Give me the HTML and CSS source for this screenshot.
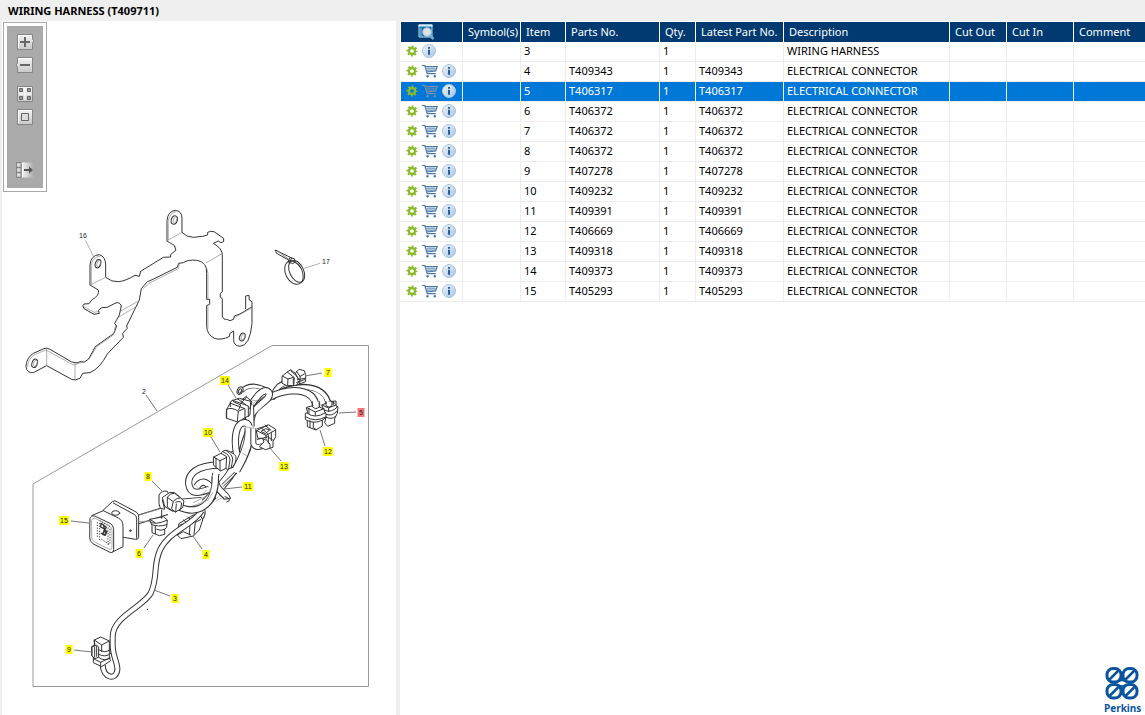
FILE: index.html
```html
<!DOCTYPE html>
<html lang="en">
<head>
<meta charset="utf-8">
<title>WIRING HARNESS (T409711)</title>
<link rel="stylesheet" href="styles.css">
<script src="parts.js" defer></script>
</head>
<body>
<svg class="defs" width="0" height="0" aria-hidden="true">
  <defs>
    <linearGradient id="btn" x1="0" y1="0" x2="0" y2="1"><stop offset="0" stop-color="#f4f4f4"/><stop offset="1" stop-color="#c9c9c9"/></linearGradient>
    <linearGradient id="fade" x1="0" y1="0" x2="1" y2="0"><stop offset="0" stop-color="#f4f4f4"/><stop offset="1" stop-color="#aaa"/></linearGradient>
    <linearGradient id="orb" x1="0" y1="0" x2="1" y2="1"><stop offset="0" stop-color="#f2f7fc"/><stop offset="1" stop-color="#a3c4e0"/></linearGradient>
    <symbol id="gear" viewBox="0 0 12 12"><circle cx="6" cy="6" r="4.600" fill="none" stroke="#8aba2c" stroke-width="1.900" stroke-dasharray="1.800 1.810" stroke-dashoffset=".9"/><circle cx="6" cy="6" r="3" fill="none" stroke="#8aba2c" stroke-width="2.300"/></symbol>
    <symbol id="cart" viewBox="0 0 16 14"><path d="M0 1.500h2.800l2.400 8.200M3.200 2.500h12l-1.600 4.500-9 1M5.200 9.700h8.600" fill="none" stroke="currentColor" stroke-width="1.200"/><path d="M4 4.300h10.500M4.500 6.200h9.500M6 2.500v5M8 2.500v5M10 2.500v5M12 2.500v4.600" fill="none" stroke="currentColor" stroke-width=".6"/><circle cx="5.500" cy="12.200" r="1.200" fill="currentColor"/><circle cx="12.800" cy="12.200" r="1.200" fill="currentColor"/></symbol>
    <symbol id="info" viewBox="0 0 14 14"><circle cx="7" cy="7" r="6.500" fill="url(#orb)" stroke="#a9c5de"/><path d="M6 5.700h2v5H6zM6 3.100h2v1.600H6z" fill="#2c5e9e"/></symbol>
  </defs>
</svg>
<header class="title"><h1>WIRING HARNESS (T409711)</h1></header>
<main class="panes">
  <section class="drawing-pane">
    <div class="toolbar">
      <button class="tool" aria-label="Zoom in"><svg viewBox="0 0 18 16"><path d="M1.500 .5h15v4.500l1.500 2-1.500 2v6.500h-15z" fill="url(#btn)" stroke="#858585"/><path d="M2.500 14V1.500h13" fill="none" stroke="#fff"/><path d="M4 7h10v2H4zM8 3h2v10H8z" fill="#666"/></svg></button>
      <button class="tool" aria-label="Zoom out"><svg viewBox="0 0 18 16"><path d="M1.500 .5h15v15h-15V10L0 8l1.500-2z" fill="url(#btn)" stroke="#858585"/><path d="M2.500 1.500h13" fill="none" stroke="#fff"/><path d="M4 7h10v2H4z" fill="#666"/></svg></button>
      <button class="tool spaced" aria-label="Fit page"><svg viewBox="0 0 18 16"><path d="M1.500 .5h15v15h-15z" fill="url(#btn)" stroke="#858585"/><path d="M3.500 2.500h3v3h-3zM11.500 2.500h3v3h-3zM3.500 10.500h3v3h-3zM11.500 10.500h3v3h-3z" fill="#999" stroke="#666"/><path d="M9 2v12M3 8h12" stroke="#fff" fill="none"/></svg></button>
      <button class="tool" aria-label="Actual size"><svg viewBox="0 0 18 16"><path d="M1.500 .5h15v15h-15z" fill="url(#btn)" stroke="#858585"/><path d="M2.500 14V1.500h13" fill="none" stroke="#fff"/><path d="M5.500 4.500h7v7h-7z" fill="#ddd" stroke="#666"/></svg></button>
      <button class="tool last" aria-label="Toggle list"><svg viewBox="0 0 18 16"><path d="M6 .5h12v15H6z" fill="url(#fade)"/><path d="M1 1.500h4v3H1zM1 6.500h4v3H1zM1 11.500h4v3H1z" fill="#ddd"/><path d="M.5 .5h4.500v15H.5zM.5 5.500H5M.5 10.500H5" fill="none" stroke="#858585"/><path d="M6.500 1v14" stroke="#fff"/><path d="M8 7h5V4.500L17 8l-4 3.500V9H8z" fill="#555"/></svg></button>
    </div>
    <svg class="drawing" viewBox="2 200 394 515" role="img" aria-label="Wiring harness parts drawing">
      <path class="frame" d="M33 484 272 345.500H368.500V686.500H33z"/>
      <g class="ink" transform="translate(20 200) scale(.3333)">
        <path d="M441 122V62Q443 34 466 31Q486 33 486 55V97Q500 112 520 112L548 109 563 105V97Q572 92 582 95L611 115V125L603 128 595 123 580 130Q608 145 607 168V275L601 280V292L607 296V348Q610 360 620 358L630 362 641 358 643 348 660 342 696 320V370Q690 438 660 439Q640 437 641 418V393L629 401V409Q605 422 583 415Q561 403 560 380V317L569 313V298H560V220Q562 185 530 181Q505 178 490 188L476 190 472 202 390 242 382 245 364 266 358 300 320 378 322 385 308 400 310 412 262 462Q240 505 210 518L188 520 180 535Q165 543 155 538L80 497 40 518Q20 520 18 500Q18 475 40 460L72 446Q80 442 90 448L155 486Q170 492 185 484L192 487 206 477 226 440 282 400 290 378 284 370 298 345 304 318Q298 303 285 310L262 322 245 323 235 331 238 340 222 343 192 326Q185 316 192 312L207 311 215 300Q240 286 235 270L210 255V195Q213 165 238 164Q257 170 257 195V232Q275 247 295 245Q315 244 345 226L358 229 362 214 430 172 452 171 452 164 468 150 463 137z"/>
        <ellipse cx="463" cy="60" rx="9" ry="13" transform="rotate(18 463 60)"/><ellipse class="thin" cx="465" cy="60" rx="5" ry="10" transform="rotate(18 465 60)"/>
        <ellipse cx="234" cy="191" rx="8" ry="13" transform="rotate(18 234 191)"/><ellipse class="thin" cx="236" cy="191" rx="5" ry="10" transform="rotate(18 236 191)"/>
        <ellipse cx="44" cy="490" rx="8" ry="13" transform="rotate(20 44 490)"/><ellipse class="thin" cx="46" cy="490" rx="5" ry="10" transform="rotate(20 46 490)"/>
        <ellipse cx="667" cy="411" rx="8" ry="12" transform="rotate(22 667 411)"/><ellipse class="thin" cx="669" cy="411" rx="5" ry="10" transform="rotate(22 669 411)"/>
        <path d="M677 326V288L687 286 688 300 696 305V320"/>
        <path class="thin" d="M445 120V64Q447 40 468 34M441 122 486 97M214 253V198Q216 172 240 168M210 255 257 232M80 447V496M165 490V540M300 334 358 302M298 350 353 317M560 188 607 160M23 500Q22 478 45 463L78 450 160 495 190 486M287 376 280 405 230 440 207 478M192 320 222 337 238 334M564 385V320M564 297V222Q562 192 540 184M478 194 475 206 390 248 369 266M643 353 692 326M445 125 468 140"/>
        <path class="thin" d="M197 122 222 172"/>
        <path d="M767 154Q762 150 768 151L815 174 811 183 770 160zM811 173l12 3 3 10-8 5-13-5z"/>
        <ellipse class="line" cx="822" cy="218" rx="25" ry="37" transform="rotate(-27 822 218)"/>
        <ellipse class="line" cx="830" cy="214" rx="21" ry="35" transform="rotate(-25 830 214)"/>
        <path class="thin" d="M850 206 900 190M773 154 803 176M780 157 809 180"/>
      </g>
      <g class="ink" transform="translate(130 440) scale(.3333)">
        <path class="c18" d="M215 205Q224 225 205 240"/><path class="c18 core" d="M215 202Q224 225 203 243"/>
        <path d="M148 250 190 225 210 222 218 240 208 270 190 288 153 296 142 285z"/><path class="line" d="M160 240l20 15-2 30M174 232l22 15-4 36M142 285l18-10 22 10M150 255l25-8M196 247l16-8"/>
        <path class="c18" d="M215 212C190 255 120 270 90 330C68 380 85 410 62 460C40 500-52 530-52 590V615C-52 650-36 670-38 690C-42 722-80 715-82 675"/>
        <path class="c18 core" d="M215 212C190 255 120 270 90 330C68 380 85 410 62 460C40 500-52 530-52 590V615C-52 650-36 670-38 690C-42 722-80 715-82 675"/>
        <path class="c28" d="M20 240 110 212M150 190 215 185"/><path class="c28 core" d="M18 241 112 211M148 190 217 184"/>
        <path class="c28" d="M225 190Q300 120 352 20"/><path class="c28 core" d="M225 190Q300 120 354 15"/>
        <path class="c22" d="M200 140Q220 110 245 145L265 170"/><path class="c22 core" d="M200 140Q220 110 245 145L265 170"/>
        <path class="c22" d="M272 75C195 75 175 105 176 130C180 165 205 160 238 148"/><path class="c22 core" d="M272 75C195 75 175 105 176 130C180 165 205 160 238 148"/>
        <path class="c22" d="M258 100C245 150 290 160 292 178"/><path class="c22 core" d="M258 98C245 150 290 160 291 175"/>
        <path class="c22" d="M142 198C200 228 258 200 256 110"/><path class="c22 core" d="M142 198C200 228 258 200 256 105"/>
        <path class="line" d="M276 133 325 86 M281 138 326 94M285 170Q300 175 298 182L290 186"/>
        <path class="thin" d="M215 165 230 150M225 172 242 150M236 178 248 158M190 188 225 170M190 198 235 180M260 182l14-8M290 45 345 45M318 50l10 38M302 80l24-4"/>
        <path d="M87 190V165Q95 150 112 154L118 166 97 180 104 208 92 205z"/>
        <path d="M98 172 120 157Q134 155 142 164L155 178 150 208 128 214 105 200z"/>
        <path d="M112 200V172Q120 158 134 160L152 174 148 190 128 212z"/>
        <path d="M125 205 130 184Q142 172 152 174L162 183 158 203 137 216z"/><path class="line" d="M137 187q12-6 18 2l-3 18M137 216l2-24M112 172l16 12"/>
        <path d="M60 238 100 230 112 240 110 262 104 268V283L88 287 66 278V258z"/>
        <path class="line" d="M60 245q15 12 50-4M66 254q18 8 44 0M76 259V281M80 268q12 6 24 0M60 238l15 10M95 210v25"/>
        <path d="M300 38 318 28Q330 28 334 40L328 64 304 72z"/>
        <path d="M272 42Q276 30 292 31L312 42Q320 48 318 58L314 80 292 88 272 76z"/>
        <path d="M251 51 273 40 290 50 288 85 272 93 252 77z"/>
        <path class="line" d="M251 51 270 62V92M270 62 290 52M280 36Q300 44 300 60L296 86M290 33Q308 44 308 58L304 84M258 55v26"/>
      </g>
      <g class="ink" transform="translate(50 460) scale(.3333)">
        <path d="M160 150 188 124Q195 120 202 126L260 157Q267 162 266 172V232Q264 240 256 238L180 225z"/>
        <path class="line" d="M190 129 254 164Q260 168 260 178V235"/>
        <path d="M127 166 160 152 205 174Q220 182 219 200V260L186 277 150 250z"/>
        <path d="M120 175Q122 166 134 168L182 191Q190 196 191 208V268Q190 280 180 277L130 252Q118 244 119 232z"/>
        <path d="M125 181Q126 174 135 175L178 197Q185 201 186 211V263Q185 270 178 268L133 246Q125 240 125 231z" class="thin"/>
        <ellipse cx="197" cy="159" rx="12" ry="7"/><ellipse cx="241" cy="212" rx="2" ry="3"/>
        <path class="pins" d="M142 188V236M149 190V242M174 204V254M180 208V256M155 238 176 252M150 182 180 200"/>
        <path class="line" d="M153 190l16 12-3 6-14-7zM163 210l8 4-5 12-8-3zM154 220l12 4M160 194l6 24" stroke-width="4"/>
        <path class="thin" d="M266 165 330 147M266 185 300 183"/>
      </g>
      <g class="ink" transform="translate(50 570) scale(.3333)">
        <path d="M133 210 152 201 178 213V265L182 272 155 290 130 278V262L126 257V229L134 226z"/>
        <path class="line" d="M133 210 155 225 178 213M133 212V228M155 226V245M126 230l14-4 6 5V262l-12 4-8-8zM134 232V262M140 229v30M146 239Q165 252 182 238M145 252Q165 265 183 250M146 262Q162 276 181 264M130 266l22 11 26-13M152 277V289"/>
        <circle cx="292" cy="118" r=".7"/>
      </g>
      <g class="ink" transform="translate(200 350) scale(.3333)">
        <path class="c18" d="M220 135Q235 100 260 98"/><path class="c18 core" d="M220 135Q235 100 262 98"/>
        <path class="c14" d="M125 122Q155 95 200 120"/><path class="c14 core" d="M125 122Q155 95 203 122"/>
        <ellipse cx="120" cy="122" rx="8" ry="12" transform="rotate(25 120 122)"/><ellipse cx="120" cy="123" rx="4" ry="7" transform="rotate(25 120 123)"/>
        <path class="c18" d="M215 145C250 105 380 85 387 170"/><path class="c18 core" d="M210 150C250 105 380 85 387 172"/>
        <path class="c22" d="M152 212C160 150 240 122 285 122Q346 125 348 172"/><path class="c22 core" d="M152 212C160 150 240 122 285 122Q346 125 348 174"/>
        <path class="c22" d="M146 175C160 155 190 105 207 128C216 150 165 165 150 200"/><path class="c22 core" d="M144 178C160 155 190 105 207 128C216 150 165 165 148 205"/>
        <path class="c28" d="M148 165 150 230"/><path class="c28 core" d="M148 160 150 235"/>
        <path class="c22" d="M110 310C102 270 105 218 135 218C165 225 130 270 128 305"/><path class="c22 core" d="M110 312C102 270 105 218 135 218C165 225 130 270 128 307"/>
        <path class="c28" d="M147 232C152 270 135 315 108 360"/><path class="c28 core" d="M147 228C152 270 135 315 105 366"/>
        <path class="c18" d="M160 235V280Q165 297 188 288"/><path class="c18 core" d="M160 232V280Q165 297 190 287"/>
        <path class="thin" d="M135 230 162 235M128 310 140 318M154 150 174 153M155 165Q170 148 196 139"/>
        <path d="M80 178 95 152 118 145 152 154 150 195 113 216 80 205z"/>
        <path class="line" d="M80 178Q95 170 115 184L112 214M80 178V204M92 160 135 176 135 207M98 151 145 168V200M115 184 132 176M91 156V170M120 163l20-22 16 15-7 20M112 146l25 18M125 150l15-12M100 155l22 10-6 14"/>
        <path d="M247 78 262 66 272 59 286 70 297 58 313 62 317 74V95L288 106 260 107 247 100z"/>
        <path class="line" d="M247 78 264 87 280 82V102M264 87 263 106M262 66 283 83 281 107M272 62 290 78 298 92 290 106M286 70 295 88M289 64l12 16-2 21M313 72l-14 8M292 89l22-4M290 97l24-8"/>
        <path d="M366 165 388 155 408 153V168L414 170 412 190 404 206V220L383 229 374 218 378 202 372 180z"/>
        <path class="line" d="M366 165 385 174 408 165M374 181Q395 190 413 170M376 192Q395 202 412 183M376 201Q395 210 406 200M386 175V185M400 155V164M392 152l12 8"/>
        <path d="M320 172 346 165 373 178V185L378 190V202L367 211V228L348 240 322 230V212L316 208V190L322 188z"/>
        <path class="line" d="M322 174 346 186 372 176M322 190Q345 208 377 188M318 201Q345 218 377 201M322 212Q345 222 366 211M340 217V234L350 239M327 175V190M346 187V196M330 212v20"/>
        <path class="c22 core" d="M348 155V175"/><path class="c18 core" d="M387 155V170"/>
        <path class="line" d="M337 155V170Q348 181 359 170V155M378 155V167Q387 176 396 167V155"/>
        <path d="M170 242 205 224 227 238V260L219 275V292L196 299 178 290 192 276 188 265 175 265z"/>
        <path class="line" d="M170 242 198 256 227 240M172 236l30-9M186 236l16 14M195 225l18 16M198 256V268L210 282V296M188 265 202 260 218 270M184 244 197 236 209 240 197 250zM205 255V280M214 249V272M196 270l-10-5-14 3"/>
      </g>
      <g class="leader">
        <path d="M146 395 157 411M305 376 322 373M228 385 236 398M339 413 356 412M320 430 325 446M270 448 281 461M211 437 220 452M152 481 163 492M224 489 242 487M144 548 153 535M193 536 202 549M71 521 89 523M154 590 170 596M74 650 92 652"/>
      </g>
      <g class="callout" id="callouts"></g>
    </svg>
  </section>
  <section class="list-pane">
    <table class="parts">
      <colgroup><col class="w-tools"><col class="w-symbol"><col class="w-item"><col class="w-part"><col class="w-qty"><col class="w-latest"><col class="w-desc"><col class="w-out"><col class="w-in"><col></colgroup>
      <thead><tr>
        <th class="tools-head"><svg class="find" viewBox="0 0 16 16" role="img" aria-label="Preview"><path d="M.5 1h13v12H.5z" fill="#1675ae" stroke="#b9dbef"/><path d="M0 .5h14v2H0z" fill="#d9f0fb"/><path d="M2 5h1M2 7h1M2 9h1M2 11h1" stroke="#fff"/><path d="m11 11 4 4" stroke="#73add8" stroke-width="2.500"/><circle cx="8.500" cy="8" r="4.300" fill="#d9e2e9" stroke="#a8bac8"/></svg></th>
        <th>Symbol(s)</th><th>Item</th><th>Parts No.</th><th>Qty.</th><th>Latest Part No.</th><th>Description</th><th>Cut Out</th><th>Cut In</th><th>Comment</th>
      </tr></thead>
      <tbody id="rows"></tbody>
    </table>
    <svg class="logo" viewBox="0 0 40 48" role="img" aria-label="Perkins">
      <g fill="none" stroke="#0b559f" stroke-width="3">
        <rect x="4" y="2.500" width="14" height="13.500" rx="6"/><rect x="20" y="2.500" width="14" height="13.500" rx="6"/><rect x="4" y="18.500" width="14" height="13.500" rx="6"/><rect x="20" y="18.500" width="14" height="13.500" rx="6"/>
        <path d="M6 14 16 4M22 14 32 4M6 30.500l10-10M22 30.500l10-10M15 15.500q4-3 8 0M15 19q4 3 8 0" stroke-width="2.500"/>
      </g>
      <text x="1" y="46">Perkins</text>
    </svg>
  </section>
</main>
</body>
</html>
```
FILE: styles.css
```css
* { box-sizing: border-box; }
body { margin: 0; height: 100vh; display: flex; flex-direction: column; overflow: hidden; background: #efefef; color: #000; font: 11px/20px "Noto Sans", "Open Sans", sans-serif; }
.defs { position: absolute; }
.title { flex: none; padding: 1px 8px 0; }
.title h1 { margin: 0; font-size: 11px; line-height: 20px; font-weight: 700; }
.panes { flex: 1; min-height: 0; display: flex; gap: 4px; padding-left: 2px; }
.drawing-pane { flex: none; width: 394px; background: #fff; display: flex; flex-direction: column; align-items: flex-start; gap: 8px; }
.toolbar { flex: none; display: flex; flex-direction: column; align-items: center; gap: 7px; width: 44px; height: 170px; margin: 1px 0 0 1px; padding: 8px 0; border: 1px solid #a9a9a9; background: #aaa; box-shadow: inset 0 0 0 3px #fff; }
.tool { display: block; width: 18px; height: 16px; margin: 0; padding: 0; border: 0; background: none; }
.tool:first-child { margin-top: 3px; }
.tool svg { display: block; width: 18px; height: 16px; overflow: visible; }
.spaced { margin-top: 6px; }
.last { margin-top: 30px; }
.drawing { flex: none; display: block; width: 100%; height: auto; }
.frame { fill: none; stroke: #999; stroke-width: 1; }
.ink { fill: #fff; stroke: #333; stroke-width: 3; stroke-linejoin: round; stroke-linecap: round; }
.ink .line { fill: none; }
.ink .thin { fill: none; stroke: #888; stroke-width: 2; }
.ink .pins { fill: none; stroke: #222; stroke-width: 3; stroke-dasharray: 1 7; }
.ink .c14, .ink .c18, .ink .c22, .ink .c28 { fill: none; stroke-linecap: butt; }
.ink .c14 { stroke-width: 14; }
.ink .c18 { stroke-width: 18; }
.ink .c22 { stroke-width: 22; }
.ink .c28 { stroke-width: 28; }
.ink .core { stroke: #fff; }
.ink .c14.core { stroke-width: 9; }
.ink .c18.core { stroke-width: 12; }
.ink .c22.core { stroke-width: 16; }
.ink .c28.core { stroke-width: 22; }
.leader { fill: none; stroke: #777; stroke-width: 1; }
.callout text { font: 7px "Liberation Sans", Arial, sans-serif; fill: #222; text-anchor: middle; }
.callout rect { fill: #ff0; }
.callout .picked { fill: #f07878; }
.list-pane { flex: 1; min-width: 0; display: flex; flex-direction: column; padding: 1px 0 0 1px; background: #fff; }
.parts { width: 100%; table-layout: fixed; border-collapse: separate; border-spacing: 0; }
.w-tools { width: 62px; }
.w-symbol { width: 58px; }
.w-item { width: 45px; }
.w-part { width: 94px; }
.w-qty { width: 36px; }
.w-latest { width: 88px; }
.w-desc { width: 166px; }
.w-out { width: 57px; }
.w-in { width: 67px; }
th, td { height: 20px; padding: 0 0 0 3px; text-align: left; white-space: nowrap; font-weight: 400; }
th { padding-left: 5px; background: #003a70; color: #fff; border-right: 1px solid #fff; line-height: 20px; }
td { padding-bottom: 2px; border-right: 1px solid #ededed; border-bottom: 1px solid #ededed; line-height: 17px; }
th:last-child, td:last-child { border-right: 0; }
.tools-head { padding: 0 0 0 17px; }
.find { display: block; width: 17px; height: 16px; }
.icons { display: flex; align-items: center; gap: 4px; height: 17px; padding-left: 2px; }
.icons button { display: block; flex: none; margin: 0; padding: 0; border: 0; background: none; color: #4878a8; }
.icons svg { display: block; }
.selected td { background: #0078d7; color: #fff; }
.selected .icons button { color: #7d8ea8; }
.logo { width: 40px; height: 48px; margin: auto 2px 1px auto; }
.logo text { font: 700 10px "Noto Sans", sans-serif; fill: #0b559f; }
```
FILE: parts.js
```js
const parts = [
  [3, "", "WIRING HARNESS"], [4, "T409343"], [5, "T406317"], [6, "T406372"], [7, "T406372"], [8, "T406372"],
  [9, "T407278"], [10, "T409232"], [11, "T409391"], [12, "T406669"], [13, "T409318"], [14, "T409373"], [15, "T405293"]
];
const selectedItem = 5;
const icon = (name, size, label) =>
  `<button aria-label="${label}"><svg class="${name}" width="${size[0]}" height="${size[1]}"><use href="#${name}"/></svg></button>`;

document.getElementById("rows").innerHTML = parts.map(([item, number, name = "ELECTRICAL CONNECTOR"]) => `
  <tr class="${item === selectedItem ? "selected" : ""}">
    <td><div class="icons">${icon("gear", [12, 12], "Options")}${number ? icon("cart", [16, 14], "Add to cart") : ""}${icon("info", [14, 14], "Information")}</div></td>
    <td></td><td>${item}</td><td>${number}</td><td>1</td><td>${number}</td><td>${name}</td><td></td><td></td><td></td>
  </tr>`).join("");

// [item, centre x, centre y, highlighted]
const callouts = [
  [16, 83, 235, 0], [17, 326, 261, 0], [2, 144, 391, 0], [7, 328, 372, 1], [14, 225, 380, 1], [5, 361, 412, 1],
  [12, 328, 451, 1], [13, 284, 466, 1], [10, 208, 432, 1], [11, 248, 486, 1], [8, 148, 476, 1], [15, 64, 520, 1],
  [6, 139, 553, 1], [4, 206, 554, 1], [3, 175, 598, 1], [9, 69, 649, 1]
];
document.getElementById("callouts").innerHTML = callouts.map(([item, x, y, lit]) => {
  const w = item > 9 ? 10 : 7;
  const box = lit ? `<rect class="${item === selectedItem ? "picked" : ""}" x="${x - w / 2}" y="${y - 4}" width="${w}" height="9"/>` : "";
  return `${box}<text x="${x}" y="${y + 3}">${item}</text>`;
}).join("");
```
